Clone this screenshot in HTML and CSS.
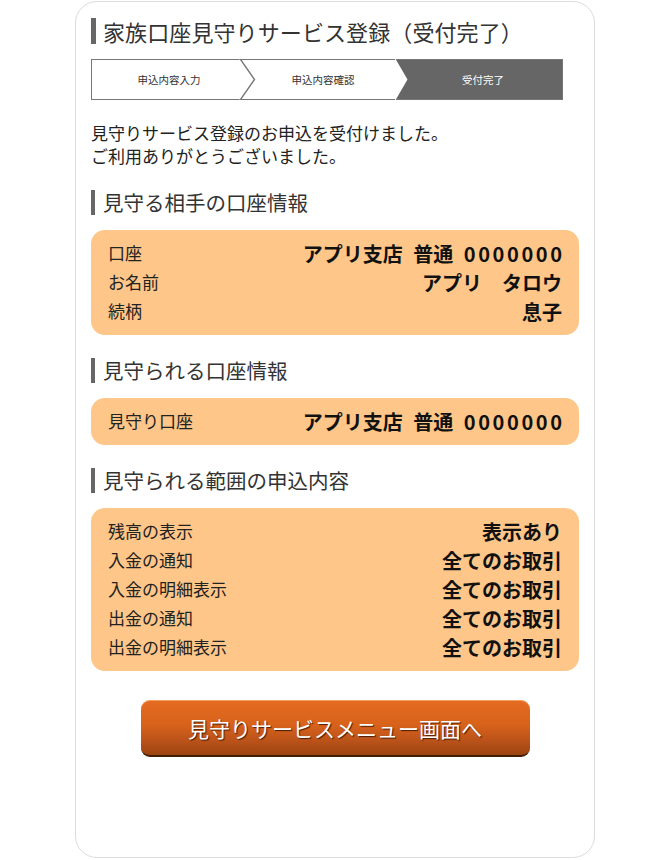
FILE: index.html
```html
<!DOCTYPE html>
<html lang="ja">
<head>
<meta charset="utf-8">
<title>家族口座見守りサービス登録（受付完了）</title>
<link rel="stylesheet" href="styles.css">
</head>
<body>
<div class="card">
  <h1 class="title">家族口座見守りサービス登録（受付完了）</h1>

  <div class="steps">
    <div class="step step-first">申込内容入力
      <svg class="chev" width="17" height="41" viewBox="0 0 17 41"><polyline points="0.5,-1 15.5,20.5 0.5,42" fill="#fff" stroke="#777" stroke-width="1.4"/></svg>
    </div>
    <div class="step step-second">申込内容確認
      <svg class="chev chev-dark" width="13" height="41" viewBox="0 0 13 41"><polygon points="0,-1 12.5,20.5 0,42" fill="#fff"/></svg>
    </div>
    <div class="step step-current">受付完了</div>
  </div>

  <p class="message">見守りサービス登録のお申込を受付けました。<br>ご利用ありがとうございました。</p>

  <h2 class="section">見守る相手の口座情報</h2>
  <div class="info">
    <div class="row"><span class="label">口座</span><span class="value acct">アプリ支店 普通 <span class="num">0000000</span></span></div>
    <div class="row"><span class="label">お名前</span><span class="value">アプリ　タロウ</span></div>
    <div class="row"><span class="label">続柄</span><span class="value">息子</span></div>
  </div>

  <h2 class="section">見守られる口座情報</h2>
  <div class="info">
    <div class="row"><span class="label">見守り口座</span><span class="value acct">アプリ支店 普通 <span class="num">0000000</span></span></div>
  </div>

  <h2 class="section">見守られる範囲の申込内容</h2>
  <div class="info">
    <div class="row"><span class="label">残高の表示</span><span class="value">表示あり</span></div>
    <div class="row"><span class="label">入金の通知</span><span class="value">全てのお取引</span></div>
    <div class="row"><span class="label">入金の明細表示</span><span class="value">全てのお取引</span></div>
    <div class="row"><span class="label">出金の通知</span><span class="value">全てのお取引</span></div>
    <div class="row"><span class="label">出金の明細表示</span><span class="value">全てのお取引</span></div>
  </div>

  <div class="actions">
    <button class="btn" type="button">見守りサービスメニュー画面へ</button>
  </div>
</div>
</body>
</html>
```

FILE: styles.css
```css
* { box-sizing: border-box; }

html, body {
  margin: 0;
  padding: 0;
  background: #fff;
}

body {
  font-family: "Noto Sans CJK JP", "Noto Sans", sans-serif;
  color: #333;
}

.card {
  width: 520px;
  height: 857px;
  margin: 1px auto 0;
  border: 1.5px solid #dcdcdc;
  border-radius: 22px;
  padding: 16px 15px 0 15px;
}

.title {
  margin: 0;
  font-size: 22px;
  font-weight: normal;
  line-height: 26px;
  color: #333;
  border-left: 5px solid #666;
  padding-left: 7px;
  letter-spacing: 0.1px;
}

.steps {
  display: flex;
  height: 41px;
  margin: 15px 16px 0 0;
  border: 1.4px solid #777;
}

.step {
  position: relative;
  display: flex;
  align-items: center;
  justify-content: center;
  font-size: 10.5px;
  color: #333;
  background: #fff;
  white-space: nowrap;
}

.step-first {
  width: 148px;
  padding-left: 6px;
}

.step-second {
  width: 156px;
  padding-left: 10px;
}

.step-current {
  flex: 1;
  background: #666;
  color: #fff;
  padding-left: 8px;
}

.chev {
  position: absolute;
  top: -1px;
  right: -16px;
  z-index: 2;
}

.chev-dark {
  right: -12px;
}

.message {
  margin: 21px 0 0;
  font-size: 17px;
  line-height: 23px;
  color: #222;
}

.section {
  margin: 23px 0 0;
  font-size: 20.5px;
  font-weight: normal;
  line-height: 25px;
  color: #333;
  border-left: 4px solid #666;
  padding-left: 8px;
}

.info {
  margin-top: 15px;
  background: #fec688;
  border-radius: 14px;
  padding: 9px 17px 9px 17px;
}

.row {
  display: flex;
  justify-content: space-between;
  align-items: center;
  height: 29px;
  white-space: nowrap;
}

.label {
  font-size: 17px;
  color: #222;
  padding-bottom: 2px;
}

.value {
  font-size: 20px;
  font-weight: bold;
  color: #111;
  white-space: nowrap;
}

.acct {
  word-spacing: 6px;
}

.num {
  letter-spacing: 2.6px;
  margin-right: -2.6px;
}

.actions {
  display: flex;
  justify-content: center;
  margin-top: 29px;
}

.btn {
  width: 389px;
  height: 57px;
  border: none;
  border-bottom: 2px solid #3f1e06;
  border-radius: 9px;
  background: linear-gradient(to bottom, #e46c22 0%, #d8621b 45%, #b9521a 75%, #9c430e 100%);
  box-shadow: inset 0 1px 0 rgba(255, 190, 140, 0.6);
  color: #fff;
  font-family: "Noto Sans CJK JP", "Noto Sans", sans-serif;
  font-size: 21px;
  text-shadow: 1px 1px 1px rgba(60, 20, 0, 0.9);
  padding: 0;
  cursor: pointer;
}
```
